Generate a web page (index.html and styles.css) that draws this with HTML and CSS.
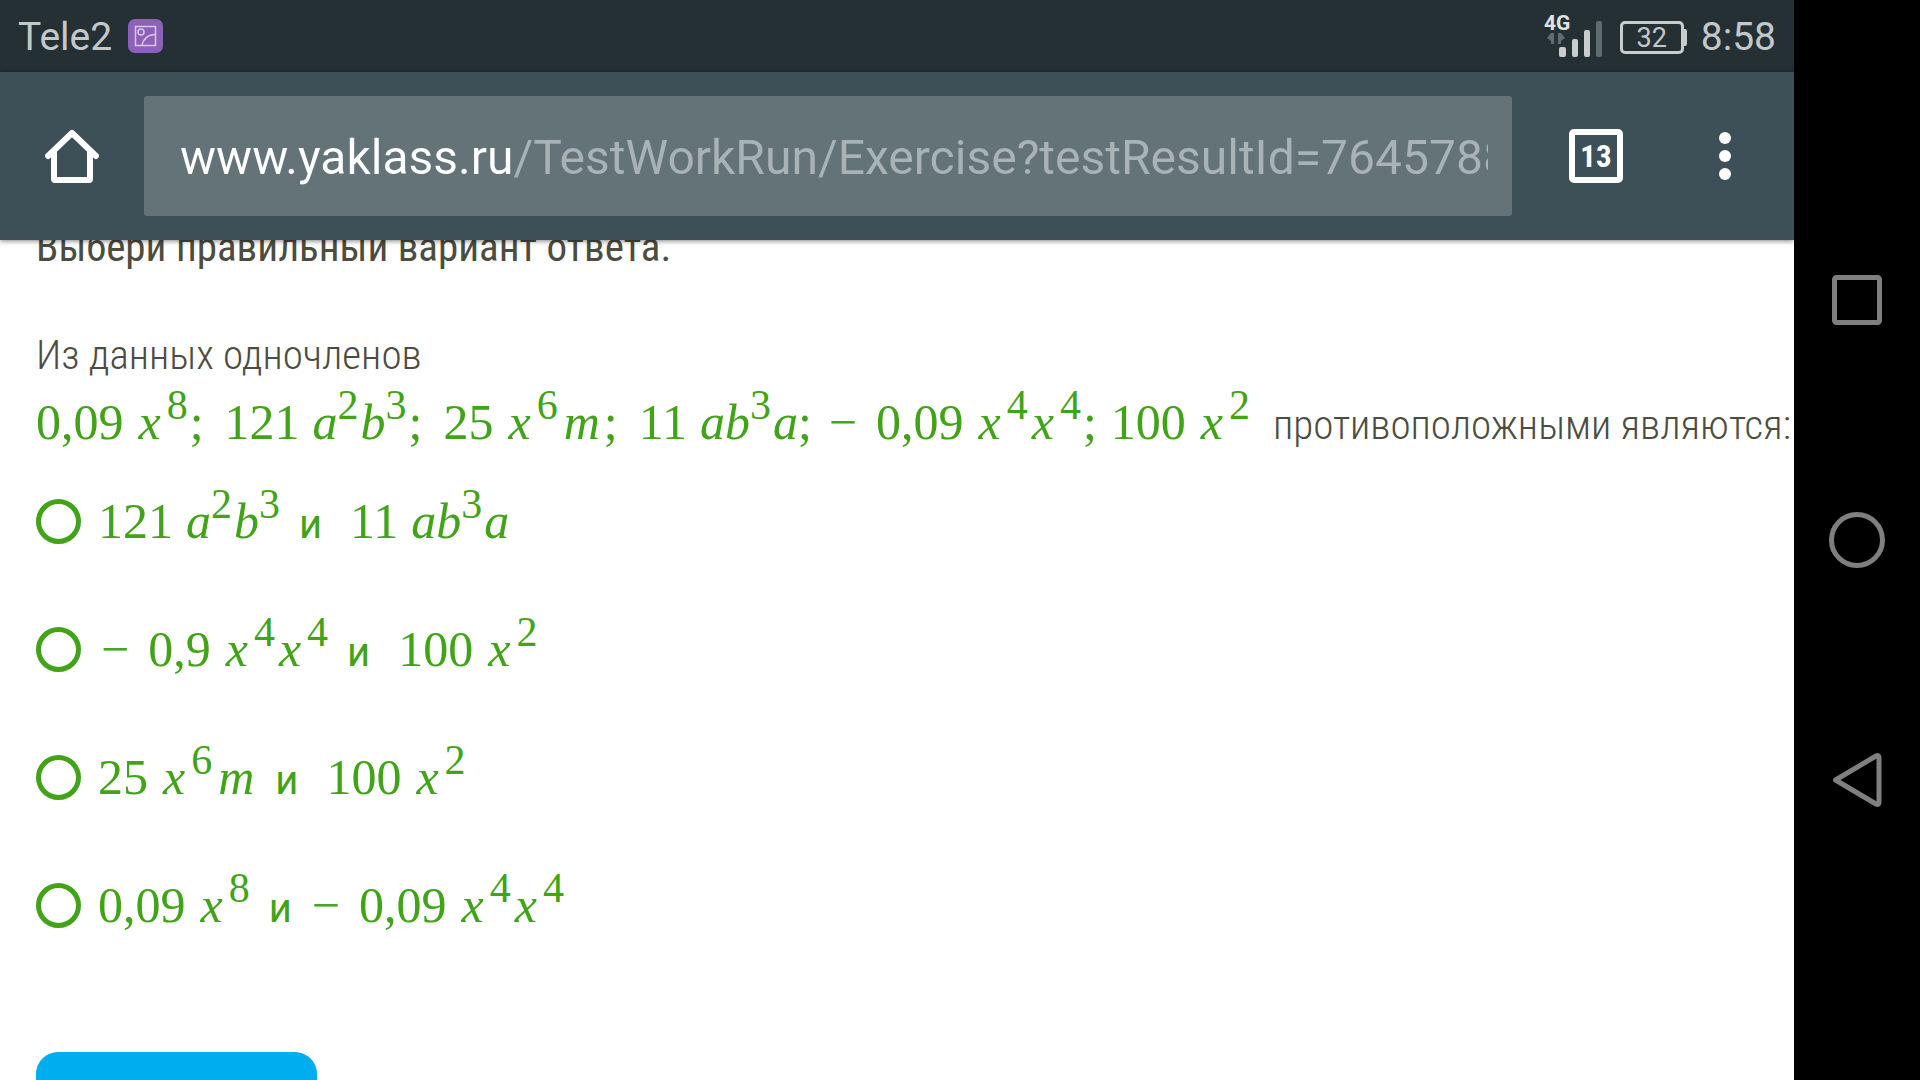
FILE: index.html
```html
<!DOCTYPE html>
<html lang="ru">
<head>
    <meta charset="UTF-8">
    <title>ЯКласс</title>
    <link rel="stylesheet" href="styles.css">
</head>
<body>
    <div class="screen">
        <div class="status">
            <span class="operator">Tele2</span>
            <svg class="gallery" width="36" height="36" viewBox="0 0 36 36" fill="none" stroke="#d9c8ea" stroke-width="1.5">
                <rect x="0" y="0" width="35" height="34" rx="7" fill="#8d60b9" stroke="none"/>
                <rect x="7.5" y="7.5" width="20" height="19"/>
                <circle cx="13" cy="13" r="3"/>
                <path d="M14 26.5C15 20 20 15.500 27.500 15.500"/>
            </svg>
            <svg class="signal" width="60" height="52" viewBox="0 -2 60 52">
                <text x="0" y="17" class="net">4G</text>
                <path d="M10 20v11h-3v-3l-4-3 4-5zM14 20h3l4 5-4 3v3h-3z" fill="#5f6b6e"/>
                <g fill="#c9cdce">
                    <rect x="15" y="34" width="7" height="10" rx="2"/>
                    <rect x="28" y="26" width="6" height="18" rx="2"/>
                    <rect x="40" y="17" width="6" height="27" rx="2"/>
                </g>
                <rect x="52" y="8" width="6" height="36" rx="2" fill="#5f6b6e"/>
            </svg>
            <span class="battery">32</span>
            <span class="time">8:58</span>
        </div>

        <div class="toolbar">
            <a class="home" href="#" aria-label="Домой">
                <svg width="54" height="54" viewBox="0 0 54 54" fill="none" stroke="#fff" stroke-width="6" stroke-linecap="round" stroke-linejoin="round">
                    <path d="M3 27L27 4l24 23"/>
                    <path d="M9 24v26a1 1 0 0 0 1 1h34a1 1 0 0 0 1-1V24"/>
                </svg>
            </a>
            <div class="address">
                <input class="url" type="text" aria-label="Адрес" value="www.yaklass.ru/TestWorkRun/Exercise?testResultId=76457881">
            </div>
            <button class="tabs" type="button">13</button>
            <button class="menu" type="button" aria-label="Меню">
                <svg width="12" height="48" viewBox="0 0 12 48" fill="#fff">
                    <circle cx="6" cy="6" r="6"/>
                    <circle cx="6" cy="24" r="6"/>
                    <circle cx="6" cy="42" r="6"/>
                </svg>
            </button>
        </div>

        <form class="task">
            <h1>Выбери правильный вариант ответа.</h1>
            <p class="text">Из данных одночленов</p>
            <p class="text formula">
                <span class="math"><span>0,09</span><span><i class="x">x</i><sup>8</sup>;</span></span>
                <span class="math"><span>121</span><span><i>a</i><sup>2</sup><i>b</i><sup>3</sup>;</span></span>
                <span class="math"><span>25</span><span><i class="x">x</i><sup>6</sup><i class="m">m</i>;</span></span>
                <span class="math"><span>11</span><span><i>a</i><i>b</i><sup>3</sup><i>a</i>;</span></span>
                <span class="math near"><span class="minus">−</span><span>0,09</span><span><i class="x">x</i><sup>4</sup><i class="x">x</i><sup>4</sup>;</span></span>
                <span class="math near"><span>100</span><span><i class="x">x</i><sup>2</sup></span></span>
                <span class="tail">противоположными являются:</span>
            </p>

            <div class="answers">
                <label class="answer">
                    <input type="radio" name="answer">
                    <span class="math"><span>121</span><span><i>a</i><sup>2</sup><i>b</i><sup>3</sup></span></span>
                    <span class="and">и</span>
                    <span class="math wide"><span>11</span><span><i>a</i><i>b</i><sup>3</sup><i>a</i></span></span>
                </label>
                <label class="answer">
                    <input type="radio" name="answer">
                    <span class="math"><span class="minus">−</span><span>0,9</span><span><i class="x">x</i><sup>4</sup><i class="x">x</i><sup>4</sup></span></span>
                    <span class="and">и</span>
                    <span class="math wide"><span>100</span><span><i class="x">x</i><sup>2</sup></span></span>
                </label>
                <label class="answer">
                    <input type="radio" name="answer">
                    <span class="math"><span>25</span><span><i class="x">x</i><sup>6</sup><i class="m">m</i></span></span>
                    <span class="and">и</span>
                    <span class="math wide"><span>100</span><span><i class="x">x</i><sup>2</sup></span></span>
                </label>
                <label class="answer">
                    <input type="radio" name="answer">
                    <span class="math"><span>0,09</span><span><i class="x">x</i><sup>8</sup></span></span>
                    <span class="and">и</span>
                    <span class="math"><span class="minus">−</span><span>0,09</span><span><i class="x">x</i><sup>4</sup><i class="x">x</i><sup>4</sup></span></span>
                </label>
            </div>

            <button class="submit" type="button" aria-label="Ответить"></button>
        </form>
    </div>

    <div class="keys">
        <button type="button" aria-label="Недавние">
            <svg width="56" height="56" viewBox="0 0 56 56"><rect x="5.500" y="5.500" width="45" height="45" rx="2"/></svg>
        </button>
        <button type="button" aria-label="Главный экран">
            <svg width="56" height="56" viewBox="0 0 56 56"><circle cx="28" cy="28" r="25.500"/></svg>
        </button>
        <button type="button" aria-label="Назад">
            <svg width="56" height="56" viewBox="0 0 56 56"><path d="M6.500 28L47 4c2-1 3 0 3 1v46c0 1-1 2-3 1z"/></svg>
        </button>
    </div>
</body>
</html>
```
FILE: styles.css
```css
* {
    box-sizing: border-box;
    margin: 0;
    padding: 0;
}

body {
    display: flex;
    height: 100vh;
    overflow: hidden;
    background: #fff;
    font-family: Roboto, sans-serif;
}

button {
    border: 0;
    background: none;
    font-family: inherit;
}

svg {
    display: block;
}

.screen {
    display: flex;
    flex: 1;
    flex-direction: column;
    min-width: 0;
    overflow: hidden;
}

/* status bar */
.status {
    display: flex;
    flex: none;
    align-items: center;
    height: 72px;
    padding: 2px 18px 0 18px;
    background: #253034;
    color: #c3c8ca;
    font-size: 39px;
}

.gallery {
    margin: 0 auto 0 16px;
}

.signal {
    overflow: visible;
}

.net {
    fill: #dfe2e3;
    font-size: 21px;
    font-weight: bold;
}

.battery {
    position: relative;
    width: 64px;
    height: 33px;
    margin: 0 17px 0 16px;
    border: 3px solid #c9cdce;
    border-radius: 5px;
    font-size: 27px;
    line-height: 29px;
    text-align: center;
}

.battery::after {
    content: "";
    position: absolute;
    top: 5px;
    right: -6px;
    width: 4px;
    height: 17px;
    border-radius: 0 2px 2px 0;
    background: #c9cdce;
}

/* browser toolbar */
.toolbar {
    z-index: 1;
    display: flex;
    flex: none;
    align-items: center;
    height: 168px;
    padding: 0 63px 0 45px;
    background: #3d5057;
    box-shadow: 0 1px 5px rgba(0, 0, 0, .5);
}

.address {
    flex: 1;
    min-width: 0;
    height: 120px;
    margin: 0 57px 0 45px;
    padding: 0 24px 0 36px;
    border-radius: 3px;
    background: #637378;
}

.url {
    width: 100%;
    height: 120px;
    padding-top: 2px;
    border: 0;
    outline: 0;
    /* host is white, the rest of the address is dimmed */
    background: linear-gradient(90deg, #fff 333px, #a9b2b5 333px);
    background-clip: text;
    color: transparent;
    font-family: inherit;
    font-size: 48px;
}

.tabs {
    width: 54px;
    height: 54px;
    border: 6px solid #fff;
    border-radius: 5px;
    color: #fff;
    font-family: "Roboto Condensed", Roboto, sans-serif;
    font-size: 31px;
    font-weight: bold;
}

.menu {
    margin-left: 96px;
}

/* task */
.task {
    flex: 1;
    min-height: 0;
    padding-left: 36px;
    color: #4c4c3f;
}

h1 {
    height: 84px;
    margin-top: -21px;
    font-family: "Roboto Condensed", Roboto, sans-serif;
    font-size: 41px;
    font-weight: 400;
    line-height: 56px;
    white-space: nowrap;
}

.text {
    margin-top: 24px;
    font-family: "Roboto Condensed", Roboto, sans-serif;
    font-size: 41px;
    font-weight: 300;
    line-height: 56px;
    white-space: nowrap;
}

.formula {
    display: flex;
    align-items: baseline;
    gap: 21px;
    margin-top: 9px;
}

.near {
    margin-left: -7px;
}

.math {
    display: flex;
    align-items: baseline;
    gap: 13px;
    color: #41a317;
    font-family: "Liberation Serif", serif;
    font-size: 50px;
    font-weight: 400;
    line-height: 60px;
}

.math sup {
    padding-right: 2px;
    font-size: 42px;
    line-height: 0;
    vertical-align: 20px;
}

.x {
    padding: 0 6px 0 2px;
}

.m {
    padding: 0 4px;
}

.minus {
    padding: 0 6px 0 3px;
}

.answers {
    display: grid;
    grid-auto-rows: 128px;
    margin-top: 38px;
}

.answer {
    display: flex;
    align-items: baseline;
    gap: 17px;
}

.answer input {
    align-self: flex-start;
    width: 45px;
    height: 45px;
    margin-top: 8px;
    appearance: none;
    border: 5px solid #41a317;
    border-radius: 50%;
}

.and {
    color: #41a317;
    font-size: 40px;
}

.wide {
    margin-left: 11px;
}

.submit {
    width: 281px;
    height: 84px;
    margin-top: 49px;
    border-radius: 22px;
    background: #00adef;
}

/* phone keys */
.keys {
    display: flex;
    flex: none;
    flex-direction: column;
    align-items: center;
    justify-content: center;
    gap: 184px;
    width: 126px;
    background: #000;
}

.keys svg {
    fill: none;
    stroke: #7f7f7f;
    stroke-width: 5;
    stroke-linejoin: round;
}
```
